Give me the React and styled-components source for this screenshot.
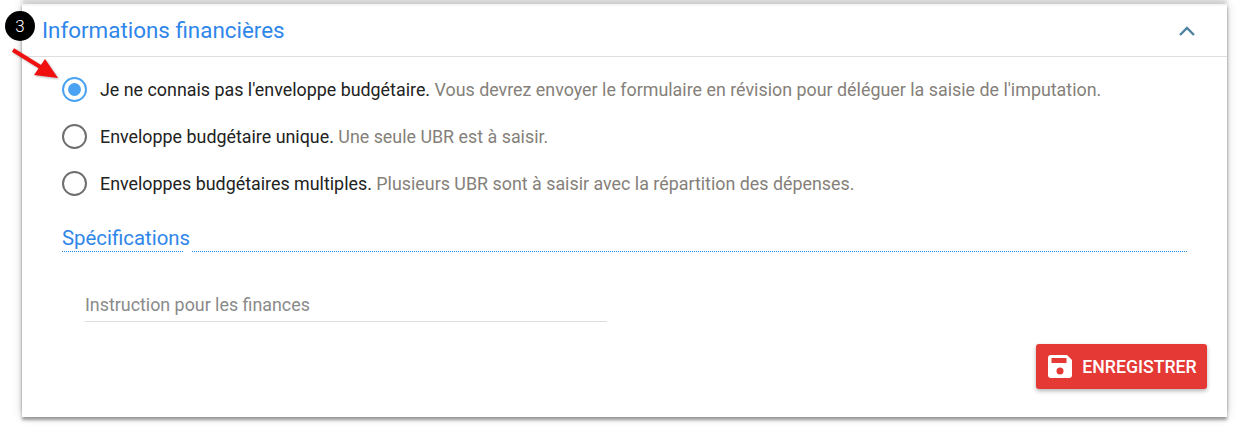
import React from "react";
import styled, { createGlobalStyle } from "styled-components";

const Global = createGlobalStyle`
  html, body { margin: 0; padding: 0; background: #fff; }
  body { font-family: Roboto, "Liberation Sans", sans-serif; width: 1256px; height: 428px; overflow: hidden; }
`;
const Page = styled.div`
  position: relative;
  width: 1256px;
  height: 428px;
  padding: 4px 29px 0 22px;
  box-sizing: border-box;
  overflow: hidden;
`;
const Card = styled.section`
  position: relative;
  width: 1205px;
  height: 413px;
  box-sizing: border-box;
  background: #fff;
  border-top: 2px solid #f6f6f6;
  box-shadow: 0 3px 3px rgba(0, 0, 0, 0.36), 0 -6px 4px rgba(0, 0, 0, 0.12), 0 0 10px rgba(0, 0, 0, 0.16);
  display: flex;
  flex-direction: column;
`;
const Header = styled.header`
  height: 51px;
  flex: none;
  box-sizing: border-box;
  border-bottom: 1px solid #dedede;
  display: flex;
  align-items: center;
  justify-content: space-between;
  padding: 0 30px 2px 20px;
`;
const Title = styled.h2`
  margin: 0;
  font-size: 22.4px;
  font-weight: 400;
  color: #2f86ea;
`;
const Chevron = styled.svg`
  width: 20px;
  height: 12px;
  margin-top: 2px;
  fill: none;
  stroke: #4f83a0;
  stroke-width: 2.4;
`;
const Body = styled.div`
  flex: 1;
  padding: 9px 40px 0 40px;
  display: flex;
  flex-direction: column;
`;
const Option = styled.label`
  height: 47px;
  display: flex;
  align-items: center;
  gap: 13px;
  font-size: 17.88px;
  color: #222;
`;
const Ring = styled.span`
  width: 25px;
  height: 25px;
  flex: none;
  box-sizing: border-box;
  border-radius: 50%;
  border: 2px solid ${p => (p.$on ? "#4aa3f2" : "#6e6e6e")};
  display: flex;
  align-items: center;
  justify-content: center;
  &::after {
    content: "";
    display: ${p => (p.$on ? "block" : "none")};
    width: 13px;
    height: 13px;
    border-radius: 50%;
    background: #4aa3f2;
  }
`;
const Hint = styled.span`
  color: #857f7a;
`;
const SectionRow = styled.div`
  margin-top: 14px;
  height: 30px;
  display: flex;
  align-items: flex-end;
  border-bottom: 1px dotted #1e88e5;
`;
const SectionTitle = styled.h3`
  position: relative;
  margin: 0;
  font-size: 20.4px;
  font-weight: 400;
  line-height: 24px;
  height: 24px;
  color: #2f86ea;
  transform: translateY(-1px);
  &::after {
    content: "";
    position: absolute;
    left: 121px;
    bottom: -3px;
    width: 9px;
    height: 4px;
    background: #fff;
  }
`;
const Field = styled.div`
  margin: 37px 0 0 23px;
  width: 522px;
  height: 33px;
  box-sizing: border-box;
  border-bottom: 1px solid #dcdcdc;
  font-size: 17.85px;
  line-height: 32px;
  color: #8a8a8a;
`;
const Actions = styled.div`
  display: flex;
  justify-content: flex-end;
  margin: 22px -20px 0 0;
`;
const SaveButton = styled.button`
  width: 171px;
  height: 45px;
  border: 0;
  border-radius: 3px;
  background: #e53935;
  color: #fff;
  display: flex;
  align-items: center;
  justify-content: center;
  gap: 10px;
  padding: 0 0 0 2px;
  font-family: inherit;
  font-size: 17.7px;
  font-weight: 500;
  box-shadow: 0 2px 4px rgba(0, 0, 0, 0.3);
`;
const Badge = styled.div`
  position: absolute;
  left: 5px;
  top: 11px;
  width: 30px;
  height: 30px;
  border-radius: 50%;
  background: #000;
  color: #fff;
  font-size: 17px;
  font-weight: 300;
  display: flex;
  align-items: center;
  justify-content: center;
`;
const Arrow = styled.svg`
  position: absolute;
  left: 10px;
  top: 46px;
  width: 52px;
  height: 36px;
  filter: drop-shadow(1px 1px 1px rgba(0, 0, 0, 0.3));
`;

export default function App() {
  return (
    <Page>
      <Global />
      <Card>
        <Header>
          <Title>Informations financières</Title>
          <Chevron viewBox="0 0 20 12"><path d="M3 10 L10 3 L17 10" /></Chevron>
        </Header>
        <Body>
          <Option>
            <Ring $on />
            <span>Je ne connais pas l'enveloppe budgétaire. <Hint>Vous devrez envoyer le formulaire en révision pour déléguer la saisie de l'imputation.</Hint></span>
          </Option>
          <Option>
            <Ring />
            <span>Enveloppe budgétaire unique. <Hint>Une seule UBR est à saisir.</Hint></span>
          </Option>
          <Option>
            <Ring />
            <span>Enveloppes budgétaires multiples. <Hint>Plusieurs UBR sont à saisir avec la répartition des dépenses.</Hint></span>
          </Option>
          <SectionRow><SectionTitle>Spécifications</SectionTitle></SectionRow>
          <Field>Instruction pour les finances</Field>
          <Actions>
            <SaveButton>
              <svg width="24" height="23" viewBox="0 0 24 23">
                <path fill="#fff" d="M3 0H19L24 5V20a3 3 0 0 1-3 3H3a3 3 0 0 1-3-3V3a3 3 0 0 1 3-3Z" />
                <rect x="3.5" y="3" width="15" height="5" fill="#e53935" />
                <circle cx="12" cy="16" r="3.5" fill="#e53935" />
              </svg>
              ENREGISTRER
            </SaveButton>
          </Actions>
        </Body>
      </Card>
      <Badge>3</Badge>
      <Arrow viewBox="0 0 52 36">
        <path d="M3 4 L32 22" stroke="#f01010" strokeWidth="4" fill="none" />
        <path d="M48 32 L24 29 L35 13 Z" fill="#f01010" />
      </Arrow>
    </Page>
  );
}
